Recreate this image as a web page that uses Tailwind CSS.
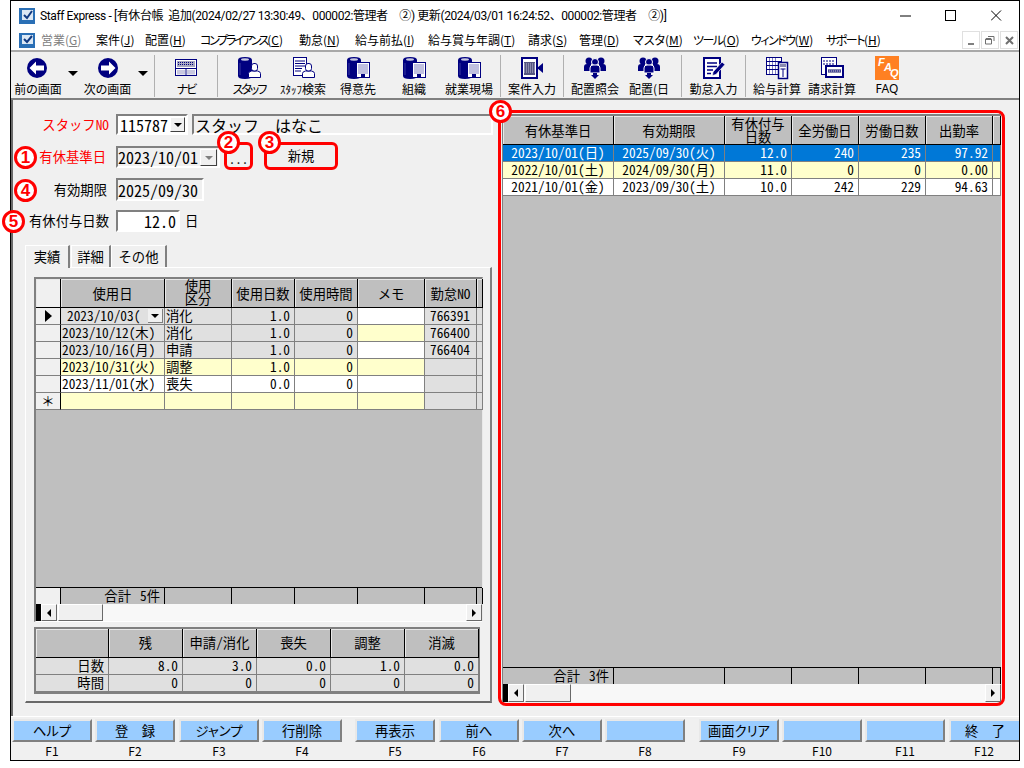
<!DOCTYPE html>
<html lang="ja">
<head>
<meta charset="utf-8">
<title>Staff Express</title>
<script src="https://cdn.jsdelivr.net/npm/@tailwindcss/browser@4"></script>
</head>
<body class="bg-white">
<svg class="absolute w-0 h-0" aria-hidden="true">
  <defs>
    <symbol id="cyl" viewBox="0 0 24 24"><path d="M1 4Q1 1 8 1T15 4V20Q15 23 8 23T1 20Z" fill="#000080"/><ellipse cx="8" cy="3.500" rx="4" ry="1.200" fill="#c8c8e0"/><path d="M3 7V19" stroke="#3838a0" stroke-width="1"/></symbol>
    <symbol id="person" viewBox="0 0 24 24"><path d="M11.500 21.500V17.500Q11.500 15.500 14.500 15H20.500Q23.500 15.500 23.500 17.500V21.500Z" fill="#fff" stroke="#000080"/><rect x="14.500" y="7.500" width="6" height="7.500" rx="2.500" fill="#fff" stroke="#000080"/></symbol>
    <symbol id="bld" viewBox="0 0 24 24"><rect x="10.500" y="6.500" width="13" height="15" fill="#fff" stroke="#000080"/><path d="M12.500 9h9M12.500 11h9M12.500 13h9M12.500 15h9M12.500 17h9" stroke="#000080" stroke-dasharray="1 1"/><rect x="15" y="18" width="4" height="3.500" fill="#000080"/></symbol>
    <symbol id="trio" viewBox="0 0 24 24"><circle cx="6" cy="5" r="3.500" fill="#000080"/><circle cx="18" cy="5" r="3.500" fill="#000080"/><path d="M1 15V11Q1 8 4 8H8L8 15ZM16 8H20Q23 8 23 11V15H16Z" fill="#000080"/><circle cx="12" cy="6" r="3.500" fill="#000080" stroke="#fff"/><path d="M7 17V12Q7 9 10 9H14Q17 9 17 12V17Z" fill="#000080" stroke="#fff"/><path d="M10 17H14V19H16L12 23L8 19H10Z" fill="#000080"/></symbol>
  </defs>
</svg>
<div class="relative w-[1024px] h-[768px] overflow-hidden [font-family:'Noto_Sans_CJK_JP',sans-serif] text-black">
  <div class="ml-[10px] w-[1010px] h-[761px] border border-black bg-[#f0f0f0] flex flex-col">

    <!-- title bar -->
    <div class="h-[29px] bg-white flex items-center text-[12px] relative">
      <svg class="ml-[8px]" width="16" height="16" viewBox="0 0 16 16"><rect width="16" height="16" fill="#2a6fb5"/><rect x="3" y="2" width="11" height="10" fill="#dce8f4"/><path d="M5 7L8 10L13 3" fill="none" stroke="#123a80" stroke-width="2"/></svg>
      <span class="ml-[5px] whitespace-nowrap [font-family:'Roboto','Noto_Sans_CJK_JP',sans-serif] tracking-[-0.4px]">Staff Express - [有休台帳&nbsp;&nbsp;追加(2024/02/27 13:30:49、000002:管理者　②) 更新(2024/03/01 16:24:52、000002:管理者　②)]</span>
      <div class="ml-auto flex items-center">
        <svg width="45" height="29" viewBox="0 0 45 29"><path d="M0 15H11" stroke="#000"/></svg>
        <svg width="46" height="29" viewBox="0 0 46 29"><rect x="0.500" y="9.500" width="10" height="10" fill="none" stroke="#000"/></svg>
        <svg width="28" height="29" viewBox="0 0 28 29"><path d="M0 9.500L10 19.500M10 9.500L0 19.500" stroke="#000"/></svg>
      </div>
    </div>

    <!-- menu -->
    <div class="h-[22px] bg-white border-b-2 border-[#a8a8a8] flex items-center text-[12px] [font-feature-settings:'palt'] whitespace-nowrap">
      <svg class="ml-[8px] mr-[6px] shrink-0" width="16" height="15" viewBox="0 0 16 15"><rect width="16" height="15" fill="#2a6fb5"/><rect x="3" y="2" width="11" height="9" fill="#dce8f4"/><path d="M5 6L8 9L13 3" fill="none" stroke="#123a80" stroke-width="2"/></svg>
      <span class="w-[55px] text-[#808080]">営業(<u>G</u>)</span>
      <span class="w-[49px]">案件(<u>J</u>)</span>
      <span class="w-[55px]">配置(<u>H</u>)</span>
      <span class="w-[99px]"><span class="tracking-[-2.300px]">コンプライアンス</span>(<u>C</u>)</span>
      <span class="w-[56px]">勤怠(<u>N</u>)</span>
      <span class="w-[73px]">給与前払(<u>I</u>)</span>
      <span class="w-[100px]">給与賞与年調(<u>T</u>)</span>
      <span class="w-[51px]">請求(<u>S</u>)</span>
      <span class="w-[54px]">管理(<u>D</u>)</span>
      <span class="w-[60px]">マスタ(<u>M</u>)</span>
      <span class="w-[58px]"><span class="tracking-[-1.500px]">ツール</span>(<u>O</u>)</span>
      <span class="w-[75px]"><span class="tracking-[-1.500px]">ウィンドウ</span>(<u>W</u>)</span>
      <span class="w-[60px]"><span class="tracking-[-1.500px]">サポート</span>(<u>H</u>)</span>
      <div class="ml-auto flex gap-px mr-[1px]">
        <div class="w-[18px] h-[18px] border border-[#e0e0e0] flex items-end justify-center pb-[3px]"><div class="w-[6px] h-[2px] bg-[#808080]"></div></div>
        <div class="w-[18px] h-[18px] border border-[#e0e0e0] flex items-center justify-center"><svg width="10" height="10" viewBox="0 0 10 10"><path d="M3 1.500H9V6M0.500 4H6.500V9H0.500Z" fill="none" stroke="#707070"/><path d="M1 4H6" stroke="#707070" stroke-width="2"/></svg></div>
        <div class="w-[18px] h-[18px] border border-[#e0e0e0] flex items-center justify-center"><svg width="9" height="9" viewBox="0 0 9 9"><path d="M1 1L8 8M8 1L1 8" stroke="#707070" stroke-width="2"/></svg></div>
      </div>
    </div>

    <!-- toolbar -->
    <div class="h-[48px] border-b-2 border-[#808080] flex text-[12px] leading-[18px] [font-feature-settings:'palt'] whitespace-nowrap *:shrink-0">
      <div class="w-[54px] flex flex-col items-center pt-[4px]"><svg class="mr-[2px]" width="24" height="24" viewBox="0 0 24 24"><circle cx="12" cy="12" r="10" fill="#000080"/><path d="M4.500 12L11 5.500V9.500H19V14.500H11V18.500Z" fill="#fff"/></svg><span>前の画面</span></div>
      <div class="w-[15px] flex justify-center pt-[19px]"><div class="w-0 h-0 border-x-[5px] border-x-transparent border-t-[5px] border-t-black"></div></div>
      <div class="w-[55px] flex flex-col items-center pt-[4px]"><svg width="24" height="24" viewBox="0 0 24 24"><circle cx="12" cy="12" r="10" fill="#000080"/><path d="M19.500 12L13 5.500V9.500H5V14.500H13V18.500Z" fill="#fff"/></svg><span>次の画面</span></div>
      <div class="w-[15px] flex justify-center pt-[19px]"><div class="w-0 h-0 border-x-[5px] border-x-transparent border-t-[5px] border-t-black"></div></div>
      <div class="w-[4px]"></div>
      <div class="w-px h-[42px] mt-[3px] bg-[#b0b0b0]"></div>
      <div class="w-[62px] flex flex-col items-center pt-[4px]"><svg width="24" height="24" viewBox="0 0 24 24"><rect x="1.500" y="3.500" width="21" height="16" fill="#fff" stroke="#000080"/><rect x="3" y="5" width="18" height="6" fill="#a8a8c0"/><path d="M4 6.500H20M4 8.500H20" stroke="#000080" stroke-dasharray="1 1"/><rect x="2" y="12" width="20" height="1" fill="#000080"/><path d="M12 13V19" stroke="#000080"/><rect x="3" y="14" width="8" height="4.500" fill="#c8c8e0"/><rect x="13" y="14" width="8" height="4.500" fill="#c8c8e0"/></svg><span class="tracking-[-2px]">ナビ</span></div>
      <div class="w-px h-[42px] mt-[3px] bg-[#b0b0b0]"></div>
      <div class="w-[62px] flex flex-col items-center pt-[4px]"><svg width="24" height="24" viewBox="0 0 24 24"><use href="#cyl"/><use href="#person"/></svg><span class="tracking-[-2px]">スタッフ</span></div>
      <div class="w-[46px] flex flex-col items-center pt-[4px]"><svg width="24" height="24" viewBox="0 0 24 24"><rect x="2.500" y="1.500" width="13" height="18" fill="#fff" stroke="#000080"/><path d="M4 5H14M4 7.500H14M4 10H14M4 12.500H11M4 15H10" stroke="#000080"/><use href="#person"/></svg><span class="text-[11px]">ｽﾀｯﾌ<span class="text-[12px]">検索</span></span></div>
      <div class="w-[64px] flex flex-col items-center pt-[4px]"><svg width="24" height="24" viewBox="0 0 24 24"><use href="#cyl"/><use href="#bld"/></svg><span>得意先</span></div>
      <div class="w-[48px] flex flex-col items-center pt-[4px]"><svg width="24" height="24" viewBox="0 0 24 24"><use href="#cyl"/><use href="#bld"/></svg><span>組織</span></div>
      <div class="w-[62px] flex flex-col items-center pt-[4px]"><svg width="24" height="24" viewBox="0 0 24 24"><use href="#cyl"/><use href="#bld"/></svg><span>就業現場</span></div>
      <div class="w-px h-[42px] mt-[3px] bg-[#b0b0b0]"></div>
      <div class="w-[62px] flex flex-col items-center pt-[4px]"><svg width="24" height="24" viewBox="0 0 24 24"><rect x="2" y="2" width="15" height="20" fill="#fff" stroke="#000080" stroke-width="2"/><rect x="4" y="6" width="11" height="13" fill="#555580"/><path d="M4 8H15M4 10H15M4 12H15M4 14H15M4 16H15" stroke="#c0c0d8" stroke-dasharray="1 1"/><path d="M17 12L23 7V17Z" fill="#000080"/></svg><span>案件入力</span></div>
      <div class="w-px h-[42px] mt-[3px] bg-[#b0b0b0]"></div>
      <div class="w-[62px] flex flex-col items-center pt-[4px]"><svg width="24" height="24" viewBox="0 0 24 24"><use href="#trio"/></svg><span>配置照会</span></div>
      <div class="w-[46px] flex flex-col items-center pt-[4px]"><svg width="24" height="24" viewBox="0 0 24 24"><use href="#trio"/></svg><span>配置(日</span></div>
      <div class="w-[9px]"></div>
      <div class="w-px h-[42px] mt-[3px] bg-[#b0b0b0]"></div>
      <div class="w-[63px] flex flex-col items-center pt-[4px]"><svg width="24" height="24" viewBox="0 0 24 24"><rect x="2" y="2" width="16" height="20" fill="#fff" stroke="#000080" stroke-width="2"/><path d="M5 7H15M5 10.500H15M5 14H11M5 17.500H9" stroke="#000080" stroke-width="1.500"/><path d="M11 16L20 6L23 8.500L14 18.500L10.500 19.500Z" fill="#000080" stroke="#fff" stroke-width="0.700"/></svg><span>勤怠入力</span></div>
      <div class="w-px h-[42px] mt-[3px] bg-[#b0b0b0]"></div>
      <div class="w-[62px] flex flex-col items-center pt-[4px]"><svg width="24" height="24" viewBox="0 0 24 24"><rect x="1.500" y="1.500" width="15" height="17" fill="#fff" stroke="#000080"/><path d="M2 5.500H16M2 9.500H16M2 13.500H16" stroke="#000080"/><path d="M4.500 2V18M7.500 2V18M10.500 2V18" stroke="#000080" stroke-width="0.500"/><rect x="13.500" y="6.500" width="9" height="16" fill="#fff" stroke="#000080" stroke-width="1.500"/><rect x="15" y="8" width="6" height="3" fill="#8888b0"/><path d="M18 13V21M15.500 13H20.500" stroke="#000080"/></svg><span>給与計算</span></div>
      <div class="w-[48px] flex flex-col items-center pt-[4px]"><svg width="24" height="24" viewBox="0 0 24 24"><rect x="1.500" y="1.500" width="15" height="17" fill="#fff" stroke="#000080"/><path d="M3 5H15M3 8H15" stroke="#000080" stroke-dasharray="2 1"/><rect x="6" y="10" width="17" height="11" fill="#fff" stroke="#000080" stroke-width="2"/><rect x="8" y="13" width="13" height="4" fill="#8888b0"/><path d="M8 15H21" stroke="#000080" stroke-dasharray="1 1"/></svg><span>請求計算</span></div>
      <div class="w-[62px] flex flex-col items-center pt-[4px]"><div class="w-[24px] h-[24px] bg-[#ff8022] relative overflow-hidden text-white font-bold italic text-[11px] leading-none [font-family:'Liberation_Sans',sans-serif]"><span class="absolute left-[3px] top-[1px]">F</span><span class="absolute left-[9px] top-[6px]">A</span><span class="absolute left-[15px] top-[12px]">Q</span></div><span class="[font-family:'Noto_Sans',sans-serif]">FAQ</span></div>
    </div>

    <!-- main -->
    <div class="h-[616px] flex text-[13.33px] leading-none [font-feature-settings:'hwid']">
      <!-- left -->
      <div class="w-[487px] shrink-0 border-l-2 border-[#696969] pt-[14px]">
        <div class="flex items-center h-[21px]">
          <span class="w-[96px] text-right text-[#f00]">スタッフNO</span>
          <div class="ml-[7px] w-[72px] h-[21px] border-2 border-t-[#808080] border-l-[#808080] border-r-white border-b-white bg-white flex items-center text-[16px] pl-[2px] relative">115787
            <div class="absolute right-[1px] top-[1px] w-[15px] h-[15px] bg-[#f0f0f0] border border-t-white border-l-white border-r-[#404040] border-b-[#404040] flex items-center justify-center"><div class="w-0 h-0 border-x-[4px] border-x-transparent border-t-[4px] border-t-black"></div></div>
          </div>
          <div class="ml-[4px] w-[301px] h-[21px] border-2 border-t-[#808080] border-l-[#808080] border-r-white border-b-white flex items-center text-[16px] pl-[1px] whitespace-pre">スタッフ<span class="ml-[16px]">はなこ</span></div>
        </div>
        <div class="flex items-center h-[22px] mt-[11px]">
          <span class="w-[93px] text-right text-[#f00]">有休基準日</span>
          <div class="ml-[10px] w-[104px] h-[22px] border-2 border-t-[#808080] border-l-[#808080] border-r-white border-b-white flex items-center text-[16px] relative">2023/10/01
            <div class="absolute right-[1px] top-[1px] w-[17px] h-[17px] bg-[#f0f0f0] border border-t-white border-l-white border-r-[#404040] border-b-[#404040] flex items-center justify-center"><div class="w-0 h-0 border-x-[4px] border-x-transparent border-t-[4px] border-t-[#808080]"></div></div>
          </div>
          <div class="ml-[4px] mb-[2px] w-[29px] h-[28px] border-[3px] border-[#f00] rounded-md flex items-end justify-center pb-[2px] text-[13px]">...</div>
          <div class="ml-[11px] mb-[2px] w-[74px] h-[28px] border-[3px] border-[#f00] rounded-md flex items-center justify-center">新規</div>
        </div>
        <div class="flex items-center h-[23px] mt-[10px]">
          <span class="w-[94px] text-right">有効期限</span>
          <div class="ml-[9px] w-[88px] h-[23px] border-2 border-t-[#808080] border-l-[#808080] border-r-white border-b-white flex items-center text-[16px]">2025/09/30</div>
        </div>
        <div class="flex items-center h-[22px] mt-[9px]">
          <span class="w-[96px] text-right">有休付与日数</span>
          <div class="ml-[7px] w-[64px] h-[22px] border-2 border-t-[#808080] border-l-[#808080] border-r-white border-b-white bg-white flex items-center justify-end text-[16px] pr-[2px]">12.0</div>
          <span class="ml-[5px]">日</span>
        </div>

        <!-- tabs -->
        <div class="ml-[12px] mt-[13px] flex h-[22px]">
          <div class="w-[45px] h-[23px] z-10 bg-[#f0f0f0] border-t border-l border-r-2 border-t-white border-l-white border-r-[#808080] flex items-center justify-center">実績</div>
          <div class="ml-px w-[40px] border-t border-l border-r-2 border-t-white border-l-white border-r-[#808080] flex items-center justify-center">詳細</div>
          <div class="w-[56px] border-t border-l border-r-2 border-t-white border-l-white border-r-[#808080] flex items-center justify-center">その他</div>
        </div>
        <div class="ml-[12px] w-[467px] h-[436px] border-t border-l border-t-white border-l-white border-r-2 border-b-2 border-r-[#808080] border-b-[#696969] pl-[8px] pt-[9px]">

          <!-- usage grid -->
          <div class="w-[449px] h-[345px] border-t-2 border-l-2 border-t-[#808080] border-l-[#808080] border-r border-b border-r-[#e8e8e8] border-b-white bg-[#bfbfbf] flex flex-col">
            <div class="grid grid-cols-[25px_104px_67px_63px_63px_67px_52px_6px] grid-rows-[29px] *:flex *:items-center *:justify-center *:text-center *:border-r *:border-b *:border-black *:bg-[#bfbfbf] *:shadow-[inset_1px_1px_0_#e8e8e8] leading-[13px]">
              <div class="!bg-[#f0f0f0]"></div>
              <div>使用日</div>
              <div class="pb-[2px]">使用<br>区分</div>
              <div>使用日数</div>
              <div>使用時間</div>
              <div>メモ</div>
              <div>勤怠NO</div>
              <div></div>
            </div>
            <div class="grid grid-cols-[25px_104px_67px_63px_63px_67px_52px_6px] auto-rows-[17px] *:flex *:items-center *:border-r *:border-b *:border-[#808080] *:whitespace-nowrap">
              <div class="bg-[#f0f0f0] !border-r-black justify-center"><div class="w-0 h-0 border-y-[6px] border-y-transparent border-l-[7px] border-l-black"></div></div>
              <div class="bg-[#e0e0e0] pl-[6px] relative">2023/10/03(<div class="absolute right-[1px] top-[1px] w-[15px] h-[14px] bg-[#f0f0f0] border-r border-b border-[#808080] flex items-center justify-center"><div class="w-0 h-0 border-x-[4px] border-x-transparent border-t-[4px] border-t-black"></div></div></div>
              <div class="bg-[#e0e0e0] pl-[1px]">消化</div>
              <div class="bg-[#e0e0e0] justify-end pr-[4px]">1.0</div>
              <div class="bg-[#e0e0e0] justify-end pr-[4px]">0</div>
              <div class="bg-white"></div>
              <div class="bg-[#e0e0e0] pl-[5px]">766391</div>
              <div class="bg-[#e0e0e0]"></div>

              <div class="bg-[#f0f0f0] !border-r-black"></div>
              <div class="bg-[#e0e0e0] pl-[1px]">2023/10/12(木)</div>
              <div class="bg-[#e0e0e0] pl-[1px]">消化</div>
              <div class="bg-[#e0e0e0] justify-end pr-[4px]">1.0</div>
              <div class="bg-[#e0e0e0] justify-end pr-[4px]">0</div>
              <div class="bg-[#ffffcc]"></div>
              <div class="bg-[#e0e0e0] pl-[5px]">766400</div>
              <div class="bg-[#e0e0e0]"></div>

              <div class="bg-[#f0f0f0] !border-r-black"></div>
              <div class="bg-[#e0e0e0] pl-[1px]">2023/10/16(月)</div>
              <div class="bg-[#e0e0e0] pl-[1px]">申請</div>
              <div class="bg-[#e0e0e0] justify-end pr-[4px]">1.0</div>
              <div class="bg-[#e0e0e0] justify-end pr-[4px]">0</div>
              <div class="bg-white"></div>
              <div class="bg-[#e0e0e0] pl-[5px]">766404</div>
              <div class="bg-[#e0e0e0]"></div>

              <div class="bg-[#f0f0f0] !border-r-black"></div>
              <div class="bg-[#ffffcc] pl-[1px]">2023/10/31(火)</div>
              <div class="bg-[#ffffcc] pl-[1px]">調整</div>
              <div class="bg-[#ffffcc] justify-end pr-[4px]">1.0</div>
              <div class="bg-[#ffffcc] justify-end pr-[4px]">0</div>
              <div class="bg-[#ffffcc]"></div>
              <div class="bg-[#e0e0e0]"></div>
              <div class="bg-[#e0e0e0]"></div>

              <div class="bg-[#f0f0f0] !border-r-black"></div>
              <div class="bg-white pl-[1px]">2023/11/01(水)</div>
              <div class="bg-white pl-[1px]">喪失</div>
              <div class="bg-white justify-end pr-[4px]">0.0</div>
              <div class="bg-white justify-end pr-[4px]">0</div>
              <div class="bg-white"></div>
              <div class="bg-[#e0e0e0]"></div>
              <div class="bg-[#e0e0e0]"></div>

              <div class="bg-[#f0f0f0] !border-r-black justify-center [font-feature-settings:normal]">＊</div>
              <div class="bg-[#ffffcc]"></div>
              <div class="bg-[#ffffcc]"></div>
              <div class="bg-[#ffffcc]"></div>
              <div class="bg-[#ffffcc]"></div>
              <div class="bg-[#ffffcc]"></div>
              <div class="bg-[#e0e0e0]"></div>
              <div class="bg-[#e0e0e0]"></div>
            </div>
            <div class="flex-1"></div>
            <div class="grid grid-cols-[25px_104px_67px_63px_63px_67px_52px_6px] h-[17px] border-t border-black *:flex *:items-center *:border-r *:border-black *:bg-[#bfbfbf] *:whitespace-nowrap">
              <div class="!bg-[#f0f0f0]"></div>
              <div class="justify-end pr-[4px]"><span>合計</span><span class="ml-[9px]">5件</span></div>
              <div></div><div></div><div></div><div></div><div></div><div></div>
            </div>
            <div class="h-[17px] flex bg-[#f8f8f8]">
              <div class="w-[5px] bg-black"></div>
              <div class="w-[16px] bg-[#f0f0f0] border border-t-white border-l-white border-r-[#696969] border-b-[#696969] flex items-center justify-center"><div class="w-0 h-0 border-y-[4px] border-y-transparent border-r-[4px] border-r-black"></div></div>
              <div class="w-[45px] ml-px bg-[#f0f0f0] border border-t-white border-l-white border-r-[#696969] border-b-[#696969]"></div>
              <div class="flex-1"></div>
              <div class="w-[16px] bg-[#f0f0f0] border border-t-white border-l-white border-r-[#696969] border-b-[#696969] flex items-center justify-center"><div class="w-0 h-0 border-y-[4px] border-y-transparent border-l-[4px] border-l-black"></div></div>
            </div>
          </div>

          <!-- summary -->
          <div class="mt-[5px] w-[446px] border-2 border-[#808080] border-b-[#808080]">
            <div class="grid grid-cols-[73px_74px_74px_74px_74px_74px] grid-rows-[29px] *:flex *:items-center *:justify-center *:border-r *:border-b *:border-black *:bg-[#bfbfbf] *:shadow-[inset_1px_1px_0_#e8e8e8]">
              <div></div><div>残</div><div>申請/消化</div><div>喪失</div><div>調整</div><div>消滅</div>
            </div>
            <div class="grid grid-cols-[73px_74px_74px_74px_74px_74px] auto-rows-[17px] *:flex *:items-center *:justify-end *:border-r *:border-b *:border-[#808080] *:bg-[#e0e0e0] *:pr-[4px]">
              <div>日数</div><div>8.0</div><div>3.0</div><div>0.0</div><div>1.0</div><div>0.0</div>
              <div>時間</div><div>0</div><div>0</div><div>0</div><div>0</div><div>0</div>
            </div>
          </div>
        </div>
      </div>

      <!-- right -->
      <div class="mt-[10px] w-[507px] h-[596px] shrink-0 border-[3px] border-[#f00] rounded-lg p-px">
        <div class="w-[499px] h-[588px] border-t-2 border-l border-[#808080] bg-[#bfbfbf] flex flex-col">
          <div class="grid grid-cols-[111px_111px_67px_67px_67px_67px_8px] grid-rows-[29px] *:flex *:items-center *:justify-center *:text-center *:border-r *:border-b *:border-black *:bg-[#bfbfbf] *:shadow-[inset_1px_1px_0_#e8e8e8] leading-[13px]">
            <div>有休基準日</div><div>有効期限</div><div>有休付与<br>日数</div><div>全労働日</div><div>労働日数</div><div>出勤率</div><div></div>
          </div>
          <div class="grid grid-cols-[111px_111px_67px_67px_67px_67px_8px] auto-rows-[17px] *:flex *:items-center *:border-r *:border-b *:border-[#808080] *:whitespace-nowrap">
            <div class="bg-[#0078d7] text-white justify-center">2023/10/01(日)</div>
            <div class="bg-[#0078d7] text-white justify-center">2025/09/30(火)</div>
            <div class="bg-[#0078d7] text-white justify-end pr-[4px]">12.0</div>
            <div class="bg-[#0078d7] text-white justify-end pr-[4px]">240</div>
            <div class="bg-[#0078d7] text-white justify-end pr-[4px]">235</div>
            <div class="bg-[#0078d7] text-white justify-end pr-[4px]">97.92</div>
            <div class="bg-[#0078d7]"></div>

            <div class="bg-[#ffffcc] justify-center">2022/10/01(土)</div>
            <div class="bg-[#ffffcc] justify-center">2024/09/30(月)</div>
            <div class="bg-[#ffffcc] justify-end pr-[4px]">11.0</div>
            <div class="bg-[#ffffcc] justify-end pr-[4px]">0</div>
            <div class="bg-[#ffffcc] justify-end pr-[4px]">0</div>
            <div class="bg-[#ffffcc] justify-end pr-[4px]">0.00</div>
            <div class="bg-[#ffffcc]"></div>

            <div class="bg-white justify-center">2021/10/01(金)</div>
            <div class="bg-white justify-center">2023/09/30(土)</div>
            <div class="bg-white justify-end pr-[4px]">10.0</div>
            <div class="bg-white justify-end pr-[4px]">242</div>
            <div class="bg-white justify-end pr-[4px]">229</div>
            <div class="bg-white justify-end pr-[4px]">94.63</div>
            <div class="bg-white"></div>
          </div>
          <div class="flex-1"></div>
          <div class="grid grid-cols-[111px_111px_67px_67px_67px_67px_8px] h-[17px] border-t border-black *:flex *:items-center *:border-r *:border-black *:bg-[#bfbfbf] *:whitespace-nowrap">
            <div class="justify-end pr-[4px]"><span>合計</span><span class="ml-[9px]">3件</span></div>
            <div></div><div></div><div></div><div></div><div></div><div></div>
          </div>
          <div class="h-[18px] flex bg-[#f8f8f8]">
            <div class="w-[5px] bg-black"></div>
            <div class="w-[16px] bg-[#f0f0f0] border border-t-white border-l-white border-r-[#696969] border-b-[#696969] flex items-center justify-center"><div class="w-0 h-0 border-y-[4px] border-y-transparent border-r-[4px] border-r-black"></div></div>
            <div class="w-[46px] ml-px bg-[#f0f0f0] border border-t-white border-l-white border-r-[#696969] border-b-[#696969]"></div>
            <div class="flex-1"></div>
            <div class="w-[16px] bg-[#f0f0f0] border border-t-white border-l-white border-r-[#696969] border-b-[#696969] flex items-center justify-center"><div class="w-0 h-0 border-y-[4px] border-y-transparent border-l-[4px] border-l-black"></div></div>
          </div>
        </div>
      </div>
    </div>

    <!-- function keys -->
    <div class="h-[44px] border-t border-white pt-[2px] pl-px flex text-[13.33px] [font-feature-settings:'palt'] *:w-[80px] *:shrink-0 *:flex *:flex-col *:items-center">
      <div><div class="w-full h-[23px] bg-[#99ccff] border-2 border-t-[#e8e8e8] border-l-[#e8e8e8] border-r-[#808080] border-b-[#808080] flex items-center justify-center leading-none">ヘルプ</div><span class="h-[18px] flex items-center text-[12px] leading-none">F1</span></div>
      <div class="ml-[3px]"><div class="w-full h-[23px] bg-[#99ccff] border-2 border-t-[#e8e8e8] border-l-[#e8e8e8] border-r-[#808080] border-b-[#808080] flex items-center justify-center leading-none">登　録</div><span class="h-[18px] flex items-center text-[12px] leading-none">F2</span></div>
      <div class="ml-[4px]"><div class="w-full h-[23px] bg-[#99ccff] border-2 border-t-[#e8e8e8] border-l-[#e8e8e8] border-r-[#808080] border-b-[#808080] flex items-center justify-center leading-none">ジャンプ</div><span class="h-[18px] flex items-center text-[12px] leading-none">F3</span></div>
      <div class="ml-[3px]"><div class="w-full h-[23px] bg-[#99ccff] border-2 border-t-[#e8e8e8] border-l-[#e8e8e8] border-r-[#808080] border-b-[#808080] flex items-center justify-center leading-none">行削除</div><span class="h-[18px] flex items-center text-[12px] leading-none">F4</span></div>
      <div class="ml-[13px]"><div class="w-full h-[23px] bg-[#99ccff] border-2 border-t-[#e8e8e8] border-l-[#e8e8e8] border-r-[#808080] border-b-[#808080] flex items-center justify-center leading-none">再表示</div><span class="h-[18px] flex items-center text-[12px] leading-none">F5</span></div>
      <div class="ml-[4px]"><div class="w-full h-[23px] bg-[#99ccff] border-2 border-t-[#e8e8e8] border-l-[#e8e8e8] border-r-[#808080] border-b-[#808080] flex items-center justify-center leading-none">前へ</div><span class="h-[18px] flex items-center text-[12px] leading-none">F6</span></div>
      <div class="ml-[3px]"><div class="w-full h-[23px] bg-[#99ccff] border-2 border-t-[#e8e8e8] border-l-[#e8e8e8] border-r-[#808080] border-b-[#808080] flex items-center justify-center leading-none">次へ</div><span class="h-[18px] flex items-center text-[12px] leading-none">F7</span></div>
      <div class="ml-[3px]"><div class="w-full h-[23px] bg-[#99ccff] border-2 border-t-[#e8e8e8] border-l-[#e8e8e8] border-r-[#808080] border-b-[#808080]"></div><span class="h-[18px] flex items-center text-[12px] leading-none">F8</span></div>
      <div class="ml-[14px]"><div class="w-full h-[23px] bg-[#99ccff] border-2 border-t-[#e8e8e8] border-l-[#e8e8e8] border-r-[#808080] border-b-[#808080] flex items-center justify-center leading-none">画面クリア</div><span class="h-[18px] flex items-center text-[12px] leading-none">F9</span></div>
      <div class="ml-[3px]"><div class="w-full h-[23px] bg-[#99ccff] border-2 border-t-[#e8e8e8] border-l-[#e8e8e8] border-r-[#808080] border-b-[#808080]"></div><span class="h-[18px] flex items-center text-[12px] leading-none">F10</span></div>
      <div class="ml-[3px]"><div class="w-full h-[23px] bg-[#99ccff] border-2 border-t-[#e8e8e8] border-l-[#e8e8e8] border-r-[#808080] border-b-[#808080]"></div><span class="h-[18px] flex items-center text-[12px] leading-none">F11</span></div>
      <div class="ml-[4px] !w-[70px]"><div class="w-full h-[23px] bg-[#99ccff] border-2 border-t-[#e8e8e8] border-l-[#e8e8e8] border-r-0 border-b-[#808080] flex items-center justify-center leading-none">終　了</div><span class="h-[18px] flex items-center text-[12px] leading-none">F12</span></div>
    </div>
  </div>

  <!-- numbered callouts -->
  <span class="absolute left-[14px] top-[146px] w-[23px] h-[23px] rounded-full bg-white border-[3px] border-[#f00] text-[#f00] font-bold text-[17px] leading-none flex items-center justify-center [font-family:'Liberation_Sans',sans-serif]">1</span>
  <span class="absolute left-[217px] top-[131px] w-[23px] h-[23px] rounded-full bg-white border-[3px] border-[#f00] text-[#f00] font-bold text-[17px] leading-none flex items-center justify-center [font-family:'Liberation_Sans',sans-serif]">2</span>
  <span class="absolute left-[258px] top-[131px] w-[23px] h-[23px] rounded-full bg-white border-[3px] border-[#f00] text-[#f00] font-bold text-[17px] leading-none flex items-center justify-center [font-family:'Liberation_Sans',sans-serif]">3</span>
  <span class="absolute left-[14px] top-[179px] w-[23px] h-[23px] rounded-full bg-white border-[3px] border-[#f00] text-[#f00] font-bold text-[17px] leading-none flex items-center justify-center [font-family:'Liberation_Sans',sans-serif]">4</span>
  <span class="absolute left-[2px] top-[210px] w-[23px] h-[23px] rounded-full bg-white border-[3px] border-[#f00] text-[#f00] font-bold text-[17px] leading-none flex items-center justify-center [font-family:'Liberation_Sans',sans-serif]">5</span>
  <span class="absolute left-[489px] top-[100px] w-[23px] h-[23px] rounded-full bg-white border-[3px] border-[#f00] text-[#f00] font-bold text-[17px] leading-none flex items-center justify-center [font-family:'Liberation_Sans',sans-serif]">6</span>
</div>
</body>
</html>
